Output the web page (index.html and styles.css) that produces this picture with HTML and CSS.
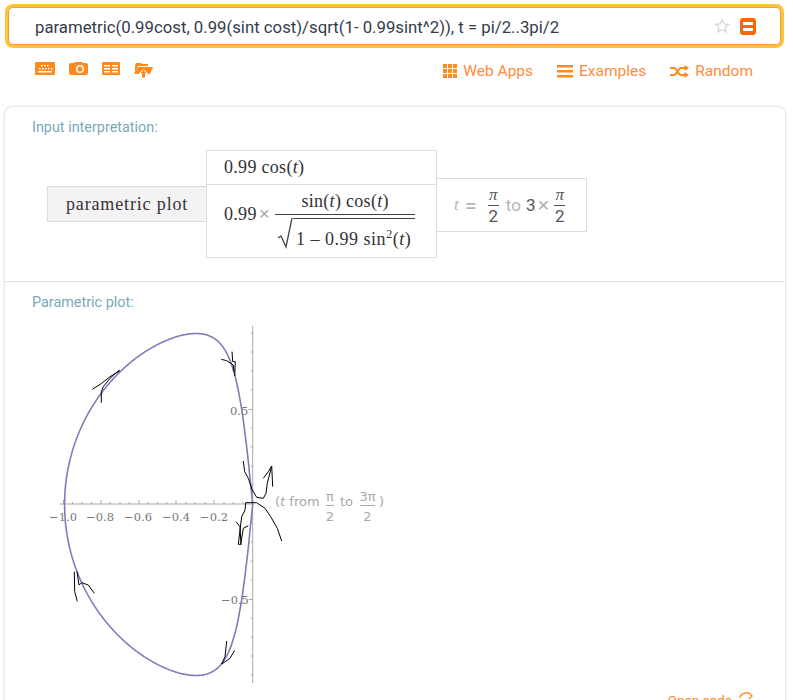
FILE: index.html
```html
<!DOCTYPE html>
<html lang="en">
<head>
    <meta charset="UTF-8">
    <meta name="viewport" content="width=device-width, initial-scale=1.0">
    <title>Parametric plot</title>
    <link rel="stylesheet" href="styles.css">
</head>
<body>
    <div class="query">
        <span class="query-text">parametric(0.99cost, 0.99(sint cost)/sqrt(1- 0.99sint^2)), t = pi/2..3pi/2</span>
        <svg class="star" width="16" height="16" viewBox="0 0 16 16"><path d="M8 1.500l1.900 4.400 4.700.4-3.600 3.100 1.100 4.600L8 11.600l-4.100 2.400 1.100-4.600-3.600-3.100 4.700-.4z" fill="none" stroke="#d4d4d4" stroke-width="1.200"/></svg>
        <span class="go"><i></i><i></i></span>
    </div>

    <div class="toolbar">
        <div class="tools">
            <svg width="20" height="13" viewBox="0 0 20 13"><path d="M1 0h18a1 1 0 0 1 1 1v11a1 1 0 0 1-1 1H1a1 1 0 0 1-1-1V1a1 1 0 0 1 1-1z" fill="#ff8a1e"/><path d="M6 3h1.500v1.500H6zM9 3h1.500v1.500H9zM12 3h1.500v1.500H12zM4 6h1.500v1.500H4zM7 6h1.500v1.500H7zM10 6h1.500v1.500H10zM13 6h1.500v1.500H13zM16 6h1.500v1.500H16zM3 9h14v1.500H3z" fill="#fff"/></svg>
            <svg width="19" height="13" viewBox="0 0 19 13"><path d="M2 1h3l1-1h7l1 1h3a2 2 0 0 1 2 2v8a2 2 0 0 1-2 2H2a2 2 0 0 1-2-2V3a2 2 0 0 1 2-2z" fill="#ff8a1e"/><circle cx="11" cy="7" r="3.300" fill="none" stroke="#fff" stroke-width="1.500"/></svg>
            <svg width="18" height="13" viewBox="0 0 18 13"><rect width="18" height="13" rx="1" fill="#ff8a1e"/><path d="M2 3h6v1.500H2zM10 3h6v1.500h-6zM2 6h6v1.500H2zM10 6h6v1.500h-6zM2 9h6v1.500H2zM10 9h6v1.500h-6z" fill="#fff"/></svg>
            <svg width="19" height="17" viewBox="0 0 19 17"><path d="M2 2V1h5l1 1h6v2H4L1 11V3z" fill="#ff8a1e"/><path d="M4 5h15l-3 7H0z" fill="#ff8a1e"/><path d="M9.500 7.500L13.500 11.500H11.500V16H7.500V11.500H5.500z" fill="#ff8a1e" stroke="#fff" stroke-width="1"/></svg>
        </div>
        <div class="links">
            <a class="link">
                <svg width="14" height="14" viewBox="0 0 14 14"><path d="M0 0h4v4H0zM5 0h4v4H5zM10 0h4v4h-4zM0 5h4v4H0zM5 5h4v4H5zM10 5h4v4h-4zM0 10h4v4H0zM5 10h4v4H5zM10 10h4v4h-4z" fill="#ff8a1e"/></svg>
                Web Apps
            </a>
            <a class="link">
                <svg width="16" height="13" viewBox="0 0 16 13"><path d="M0 0h16v2.500H0zM0 5h16v2.500H0zM0 10h16v2.500H0z" fill="#ff8a1e"/></svg>
                Examples
            </a>
            <a class="link">
                <svg width="19" height="13" viewBox="0 0 19 13"><path d="M0 3h4c3 0 4 7 7 7h4M0 10h4c3 0 4-7 7-7h4" fill="none" stroke="#ff8a1e" stroke-width="2"/><path d="M14.500 0l4.500 3-4.500 3zM14.500 7l4.500 3-4.500 3z" fill="#ff8a1e"/></svg>
                Random
            </a>
        </div>
    </div>

    <div class="card">
        <section class="pod pod-input">
            <h2 class="pod-title">Input interpretation:</h2>
            <div class="grid-math">
                <div class="cell cell-name">parametric plot</div>
                <div class="cell-stack">
                    <div class="cell cell-x">0.99 cos(<em>t</em>)</div>
                    <div class="cell cell-y">
                        <span>0.99</span><span class="times">×</span>
                        <div class="frac-big">
                            <div class="num">sin(<em>t</em>) cos(<em>t</em>)</div>
                            <div class="root">
                                <svg class="radical" width="16" height="31" viewBox="0 0 16 31"><path d="M1 20l3-2 5 11 6-29" fill="none" stroke="#444" stroke-width="1.300"/></svg>
                                <div class="radicand">1 – 0.99 sin<sup>2</sup>(<em>t</em>)</div>
                            </div>
                        </div>
                    </div>
                </div>
                <div class="cell cell-range">
                    <em>t</em><span class="eq">=</span>
                    <span class="frac"><em>π</em><b></b>2</span>
                    <span class="to">to</span><span class="dark">3</span><span class="times">×</span>
                    <span class="frac"><em>π</em><b></b>2</span>
                </div>
            </div>
        </section>

        <section class="pod pod-plot">
            <h2 class="pod-title">Parametric plot:</h2>
            <!-- viewBox uses page coordinates, so x/y can be read straight off the plot -->
            <svg class="plot" width="400" height="382" viewBox="5 310 400 382">
                <g stroke="#a8a8a8" fill="none">
                    <path d="M60 504H252.700M252.700 326V683"/>
                    <path d="M63.500 504v-4M101 504v-4M139 504v-4M176 504v-4M214 504v-4M82 504v-2M91.500 504v-2M110 504v-2M120 504v-2M129 504v-2M148 504v-2M157.500 504v-2M167 504v-2M186 504v-2M195 504v-2M205 504v-2M224 504v-2M233 504v-2M243 504v-2M72.500 504v-2"/>
                    <path d="M252.700 333h-2M252.700 352h-2M252.700 371h-2M252.700 390h-2M252.700 409.500h-4M252.700 428h-2M252.700 447h-2M252.700 466h-2M252.700 485h-2M252.700 523h-2M252.700 542h-2M252.700 561h-2M252.700 580h-2M252.700 599.500h-4M252.700 618h-2M252.700 637h-2M252.700 656h-2M252.700 675h-2"/>
                </g>
                <polyline id="curve" class="curve"/>
                <g class="ticks">
                    <text x="63" y="521">−1.0</text>
                    <text x="100" y="521">−0.8</text>
                    <text x="138" y="521">−0.6</text>
                    <text x="176" y="521">−0.4</text>
                    <text x="214" y="521">−0.2</text>
                    <text class="tick-y" x="230" y="415">0.5</text>
                    <text class="tick-y" x="221" y="604">−0.5</text>
                </g>
                <g class="range">
                    <text x="275" y="506">(<tspan font-style="italic">t</tspan> from</text>
                    <text class="mid" x="330" y="501">π</text>
                    <text class="mid" x="330" y="521">2</text>
                    <text x="340" y="506">to</text>
                    <text class="mid" x="367.500" y="501">3π</text>
                    <text class="mid" x="367.500" y="521">2</text>
                    <text x="379" y="506">)</text>
                </g>
                <path d="M326 505.500h8M360 505.500h15" stroke="#aaa" fill="none"/>
                <g class="scribble">
                    <polyline points="119.300,370 110,378.300 103.300,386.700 101.300,391.700 101.300,402.700"/>
                    <polyline points="92.300,389.300 101.700,383.300 110,376.700 120,370.700"/>
                    <polyline points="232,351.700 232.700,361.700 235.300,361.700 234.700,376"/>
                    <polyline points="221.300,359.300 226.700,360.700 233.300,365 234,372"/>
                    <polyline points="243.300,461 244.700,471.700 248.300,478.300 252.300,490 256.700,497.300 263.300,498.300 266,493.300 267.300,483.300 271.700,466 272.700,486.700"/>
                    <polyline points="263.300,478.300 268.300,471.700 271.700,466"/>
                    <polyline points="281.700,541 277.300,528.300 270.700,516.700 265,508.300 256.700,502.700 245.700,502.700 245,510 241.700,516.700 240,530 238.300,544.300 240.700,544.300 243.300,528.300 248.300,525.700"/>
                    <polyline points="236,521.700 240,526.700 241,545"/>
                    <polyline points="74.300,571.700 74.700,591.700 77.300,601.300"/>
                    <polyline points="77,571.700 79,585 81.700,582.700 88.300,585 94.300,593.300"/>
                    <polyline points="226.700,641 225,656.700 221.700,664 230,658.300 234.700,650.300"/>
                </g>
            </svg>
            <div class="open-code">
                Open code
                <svg width="16" height="12" viewBox="0 0 16 12"><path d="M2 6c0-3 3-5 6-5h3l3 3-3 3" fill="none" stroke="#ff8a1e" stroke-width="1.400"/></svg>
            </div>
        </section>
    </div>
    <script src="script.js"></script>
</body>
</html>
```

FILE: styles.css
```css
html, body {
    margin: 0;
    height: 700px;
    overflow: hidden;
}
body {
    background-color: #fff;
    font-family: Roboto, sans-serif;
    color: #333d4a;
}
.query {
    display: flex;
    align-items: center;
    box-sizing: border-box;
    height: 38px;
    margin: 7px 12px 0 8px;
    padding: 0 24px 0 26px;
    background-color: #fff;
    border: 1px solid #ff9a2e;
    border-radius: 5px;
    box-shadow: 0 0 0 3px #ffc23b;
}
.query-text {
    flex: 1;
    font-size: 16.75px;
    white-space: nowrap;
    padding-top: 2px;
}
.star {
    margin-right: 10px;
}
.go {
    display: flex;
    flex-direction: column;
    justify-content: center;
    gap: 3px;
    width: 16px;
    height: 17px;
    padding: 0 3px;
    box-sizing: border-box;
    background-color: #ff6600;
    border-radius: 3px;
}
.go i {
    display: block;
    height: 3px;
    background-color: #fff;
}
.toolbar {
    display: flex;
    justify-content: space-between;
    align-items: center;
    height: 24px;
    margin: 14px 0 0;
    padding: 0 40px 0 35px;
}
.tools {
    display: flex;
    align-items: flex-start;
    align-self: flex-start;
    gap: 14px;
    padding-top: 3px;
}
.links {
    display: flex;
    gap: 24px;
}
.link {
    display: flex;
    align-items: center;
    gap: 6px;
    font-size: 15.5px;
    color: #ff8c3a;
}
.card {
    box-sizing: border-box;
    height: 700px;
    margin: 24px 8px 0 5px;
    background-color: #fff;
    border-radius: 8px;
    box-shadow: 0 0 3px rgba(0, 0, 0, 0.25);
}
.pod-input {
    height: 175px;
    box-sizing: border-box;
    padding-top: 13px;
    border-bottom: 1px solid #e2e2e2;
}
.pod-title {
    margin: 0 0 0 27px;
    font-size: 14.4px;
    line-height: 16px;
    font-weight: 400;
    color: #7aa8bb;
}
.grid-math {
    display: flex;
    align-items: center;
    margin: 14px 0 0 42px;
    font-family: "Liberation Serif", serif;
    font-size: 18px;
    letter-spacing: 0.3px;
    color: #333;
}
.cell {
    box-sizing: border-box;
    border: 1px solid #ddd;
}
.cell-name {
    width: 160px;
    height: 36px;
    line-height: 34px;
    padding-left: 18px;
    font-size: 18px;
    letter-spacing: 0.85px;
    background-color: #f5f2f5;
}
.cell-stack {
    display: flex;
    flex-direction: column;
    width: 231px;
    margin-left: -1px;
}
.cell-x {
    height: 35px;
    line-height: 33px;
    padding-left: 17px;
}
.cell-y {
    display: flex;
    align-items: center;
    height: 74px;
    margin-top: -1px;
    padding-left: 17px;
}
.cell-y > span {
    margin-bottom: 14px;
}
.times {
    margin: 0 5px 0 2px;
    color: #aaa;
    font-family: "Liberation Sans", sans-serif;
    font-size: 19px;
}
.frac-big {
    display: flex;
    flex-direction: column;
    width: 140px;
}
.num {
    height: 25px;
    line-height: 24px;
    text-align: center;
    border-bottom: 1px solid #444;
}
.root {
    display: flex;
    height: 36px;
    margin-top: 3px;
}
.radical {
    flex: none;
    margin-left: 2px;
}
.radicand {
    flex: 1;
    padding-left: 3px;
    line-height: 40px;
    letter-spacing: 0.5px;
    border-top: 1px solid #444;
    white-space: nowrap;
}
.radicand sup {
    font-size: 12px;
    line-height: 0;
}
.cell-range {
    display: flex;
    align-items: center;
    width: 151px;
    height: 54px;
    margin: 2px 0 0 -1px;
    padding-left: 17px;
    font-family: Roboto, sans-serif;
    font-size: 17px;
    letter-spacing: 0;
    color: #b5b5b5;
}
.cell-range em {
    font-family: "Liberation Serif", serif;
}
.eq {
    margin: 0 11px 0 6px;
    font-size: 22px;
}
.frac {
    display: flex;
    flex-direction: column;
    align-items: center;
    width: 11px;
    font-size: 17px;
    line-height: 20px;
    color: #555;
}
.frac b {
    display: block;
    width: 100%;
    height: 1px;
    background-color: #555;
}
.to {
    margin: 0 5px 0 7px;
}
.dark {
    color: #555;
}
.cell-range .times {
    margin: 0 5px 0 2px;
    font-size: 20px;
}
.pod-plot {
    padding-top: 13px;
}
.plot {
    display: block;
    margin-top: -1px;
}
.curve {
    fill: none;
    stroke: #7d7dbb;
    stroke-width: 1.6;
    stroke-linejoin: round;
}
.ticks text {
    font-family: "DejaVu Serif", serif;
    font-size: 11.5px;
    fill: #777;
    text-anchor: middle;
}
.ticks .tick-y {
    text-anchor: start;
}
.range text {
    font-family: "DejaVu Sans", sans-serif;
    font-size: 13px;
    fill: #a8a8a8;
}
.range .mid {
    text-anchor: middle;
}
.scribble polyline {
    fill: none;
    stroke: #000;
    stroke-width: 1;
}
.open-code {
    display: flex;
    justify-content: flex-end;
    gap: 6px;
    padding-right: 31px;
    font-size: 13.5px;
    color: #ff8a1e;
}
```

FILE: script.js
```js
// x = 0.99 cos t, y = 0.99 sin t cos t / sqrt(1 - 0.99 sin^2 t), t = pi/2 .. 3pi/2
const points = [];
for (let i = 0; i <= 600; i++) {
    const t = Math.PI / 2 + Math.PI * i / 600;
    const s = Math.sin(t);
    const c = Math.cos(t);
    const x = 0.99 * c;
    const y = 0.99 * s * c / Math.sqrt(1 - 0.99 * s * s);
    points.push((252.7 + 190 * x).toFixed(1) + ',' + (504.5 - 190 * y).toFixed(1));
}
document.getElementById('curve').setAttribute('points', points.join(' '));
```
